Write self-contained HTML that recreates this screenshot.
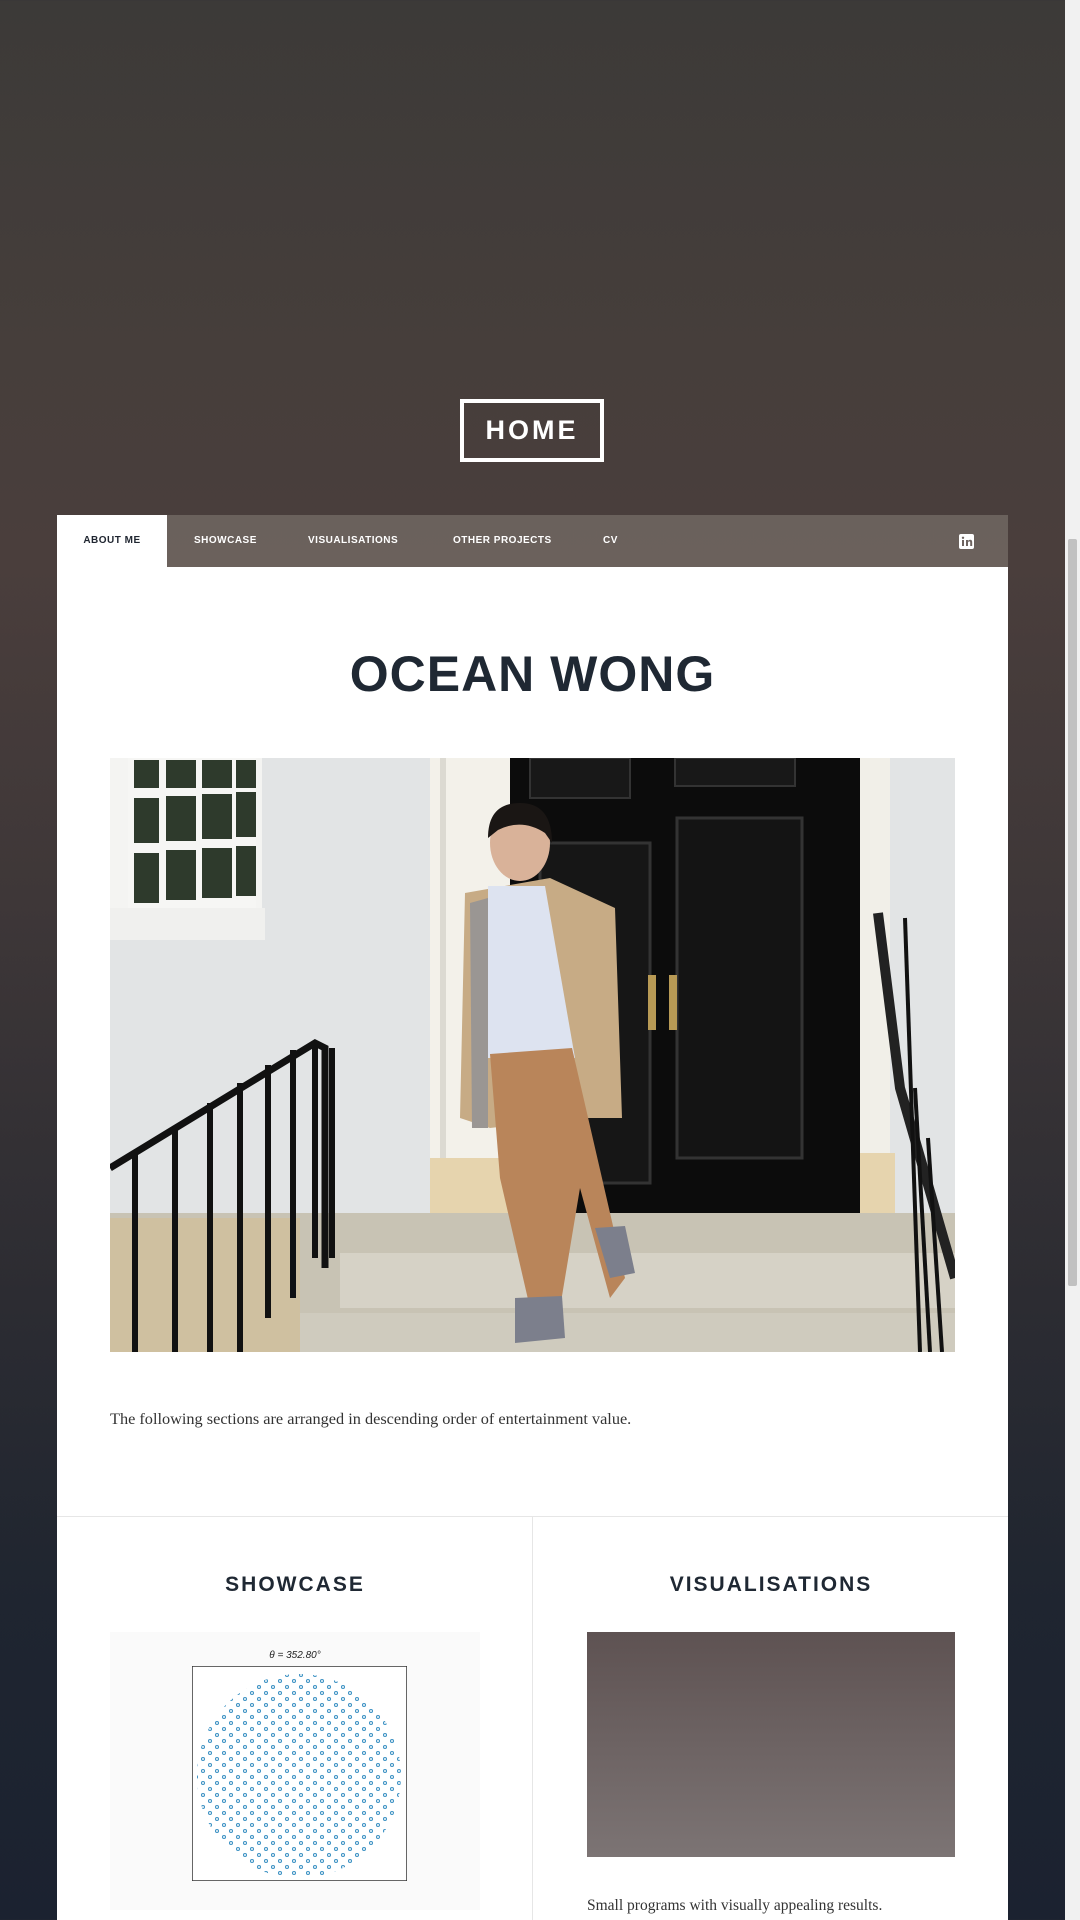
<!DOCTYPE html>
<html><head><meta charset="utf-8">
<style>
*{margin:0;padding:0;box-sizing:border-box}
html,body{width:1080px;height:1920px;overflow:hidden}
body{position:relative;font-family:"Liberation Sans",sans-serif;
background:linear-gradient(180deg,#3c3a38 0px,#463e3b 350px,#4a3e3c 560px,#3e3738 900px,#2c2c32 1300px,#1f2530 1600px,#1b2230 1920px);}
.sb{position:absolute;right:0;top:0;width:15px;height:1920px;background:#f1f1f1}
.sb i{position:absolute;left:3px;top:539px;width:9px;height:747px;background:#c1c1c1;border-radius:2px}
.home{position:absolute;left:460px;top:399px;width:144px;height:63px;border:4px solid #fff;color:#fff;font-weight:bold;font-size:27px;letter-spacing:3px;text-align:center;line-height:55px}
.nav{position:absolute;left:57px;top:515px;width:951px;height:52px;background:rgba(110,100,96,.92)}
.nav span{position:absolute;top:0;line-height:52px;font-size:10px;font-weight:bold;letter-spacing:.5px;color:#fff}
.nav .act{left:0;width:110px;height:52px;background:#fff;color:#1f2530;text-align:center}
.card{position:absolute;left:57px;top:567px;width:951px;height:1360px;background:#fff}
h1{position:absolute;left:0;width:951px;top:78px;text-align:center;font-size:50px;font-weight:bold;color:#1f2833;letter-spacing:1px}
.photo{position:absolute;left:53px;top:191px;width:845px;height:594px;overflow:hidden}
.p{position:absolute;left:53px;top:842px;font-family:"Liberation Serif",serif;font-size:16.3px;color:#333}
.hr{position:absolute;left:0;top:949px;width:951px;height:1px;background:#e6e6e6}
.vr{position:absolute;left:475px;top:950px;width:1px;height:420px;background:#e6e6e6}
h2{position:absolute;top:1006px;font-size:21px;font-weight:bold;letter-spacing:2px;color:#1f2833;text-align:center;width:476px}
.plot{position:absolute;left:53px;top:1065px;width:370px;height:278px;background:#fafafa}
.vis{position:absolute;left:530px;top:1065px;width:368px;height:225px;background:linear-gradient(180deg,#5e5252,#7c7474)}
.sm{position:absolute;left:530px;top:1330px;font-family:"Liberation Serif",serif;font-size:15.5px;color:#333}
</style></head><body>
<div class="home">HOME</div>
<div class="nav">
<span class="act">ABOUT ME</span>
<span style="left:137px">SHOWCASE</span>
<span style="left:251px">VISUALISATIONS</span>
<span style="left:396px">OTHER PROJECTS</span>
<span style="left:546px">CV</span>
<svg style="position:absolute;left:902px;top:19px" width="15" height="15" viewBox="0 0 15 15"><rect width="15" height="15" rx="2" fill="#fff"/><rect x="3" y="6" width="2" height="6" fill="#6e6460"/><circle cx="4" cy="3.8" r="1.2" fill="#6e6460"/><path d="M7 6h2v1c.5-.8 1.300-1.2 2.2-1.2 1.4 0 2 .9 2 2.5V12h-2V8.6c0-.8-.3-1.2-.9-1.2S9 7.9 9 8.6V12H7z" fill="#6e6460"/></svg>
</div>
<div class="card">
<h1>OCEAN WONG</h1>
<div class="photo">
<svg width="845" height="594" viewBox="0 0 845 594">
<rect width="845" height="594" fill="#e2e4e5"/>
<rect x="0" y="0" width="152" height="180" fill="#f4f4f2"/>
<rect x="18" y="0" width="128" height="150" fill="#f6f6f4"/>
<g fill="#2e3a2c"><rect x="24" y="2" width="25" height="28"/><rect x="56" y="2" width="30" height="28"/><rect x="92" y="2" width="30" height="28"/><rect x="126" y="2" width="20" height="28"/>
<rect x="24" y="40" width="25" height="45"/><rect x="56" y="38" width="30" height="45"/><rect x="92" y="36" width="30" height="45"/><rect x="126" y="34" width="20" height="45"/>
<rect x="24" y="95" width="25" height="50"/><rect x="56" y="92" width="30" height="50"/><rect x="92" y="90" width="30" height="50"/><rect x="126" y="88" width="20" height="50"/></g>
<rect x="0" y="150" width="155" height="32" fill="#f0f0ee"/>
<rect x="320" y="0" width="80" height="400" fill="#f3f1ea"/>
<rect x="330" y="0" width="6" height="400" fill="#dcdad2"/>
<rect x="710" y="0" width="70" height="460" fill="#f1efe8"/>
<rect x="320" y="400" width="85" height="60" fill="#e6d4ae"/>
<rect x="740" y="395" width="45" height="70" fill="#e6d4ae"/>
<rect x="400" y="0" width="350" height="455" fill="#0c0c0c"/>
<rect x="430" y="85" width="110" height="340" fill="#161616" stroke="#333" stroke-width="3"/>
<rect x="567" y="60" width="125" height="340" fill="#141414" stroke="#333" stroke-width="3"/>
<rect x="420" y="0" width="100" height="40" fill="#181818" stroke="#333" stroke-width="2"/>
<rect x="565" y="0" width="120" height="28" fill="#181818" stroke="#333" stroke-width="2"/>
<rect x="538" y="217" width="8" height="55" fill="#b89a55"/><rect x="559" y="217" width="8" height="55" fill="#b89a55"/>
<rect x="0" y="455" width="845" height="139" fill="#c8c3b4"/>
<rect x="230" y="495" width="615" height="55" fill="#d6d2c6"/>
<rect x="100" y="555" width="745" height="39" fill="#cfcbbe"/>
<rect x="0" y="460" width="190" height="134" fill="#cfc0a0"/>
<path d="M0 410 L205 285 L215 290 L215 510" stroke="#111" stroke-width="7" fill="none"/>
<g stroke="#111" stroke-width="6"><line x1="25" y1="395" x2="25" y2="594"/><line x1="65" y1="368" x2="65" y2="594"/><line x1="100" y1="345" x2="100" y2="594"/><line x1="130" y1="325" x2="130" y2="594"/><line x1="158" y1="307" x2="158" y2="560"/><line x1="183" y1="292" x2="183" y2="540"/><line x1="205" y1="285" x2="205" y2="500"/><line x1="222" y1="290" x2="222" y2="500"/></g>
<path d="M768 155 L790 330 L845 520" stroke="#222" stroke-width="10" fill="none"/>
<g stroke="#111" stroke-width="4"><line x1="795" y1="160" x2="810" y2="594"/><line x1="805" y1="330" x2="820" y2="594"/><line x1="818" y1="380" x2="832" y2="594"/></g>
<path d="M355 135 L440 120 L505 150 L512 360 L470 360 L380 370 L350 360 Z" fill="#c7ab85"/>
<path d="M360 145 L378 140 L378 370 L362 370 Z" fill="#9a9693"/>
<path d="M378 128 L435 128 L465 300 L378 300 Z" fill="#dde3f0"/>
<path d="M380 296 L462 290 L515 520 L500 540 L470 430 L450 550 L420 550 L390 420 Z" fill="#b9855a"/>
<path d="M485 470 L515 468 L525 515 L500 520 Z" fill="#7c7f8c"/>
<path d="M405 540 L452 538 L455 580 L405 585 Z" fill="#7c7f8c"/>
<ellipse cx="410" cy="85" rx="30" ry="38" fill="#d9b299"/>
<path d="M378 80 Q378 45 410 45 Q442 45 442 85 L435 75 Q412 60 388 72 Z" fill="#1a1614"/>
</svg>
</div>
<div class="p">The following sections are arranged in descending order of entertainment value.</div>
<div class="hr"></div><div class="vr"></div>
<h2 style="left:0">SHOWCASE</h2>
<h2 style="left:476px">VISUALISATIONS</h2>
<div class="plot">
<div style="position:absolute;top:18px;width:370px;text-align:center;font-size:10px;color:#222;font-style:italic">θ = 352.80°</div>
<svg style="position:absolute;left:82px;top:34px" width="215" height="215" viewBox="0 0 215 215">
<defs><pattern id="d" width="14" height="12" patternUnits="userSpaceOnUse"><circle cx="4" cy="3" r="1.5" fill="none" stroke="#3f93c4" stroke-width="1.1"/><circle cx="11" cy="9" r="1.5" fill="none" stroke="#3f93c4" stroke-width="1.1"/></pattern>
<clipPath id="c"><ellipse cx="107" cy="110" rx="102" ry="102"/></clipPath></defs>
<rect width="215" height="215" fill="#fff" stroke="#333" stroke-width="1.5"/>
<rect x="4" y="6" width="207" height="205" fill="url(#d)" clip-path="url(#c)"/>
</svg>
</div>
<div class="vis"></div>
<div class="sm">Small programs with visually appealing results.</div>
</div>
<div class="sb"><i></i></div>
</body></html>
